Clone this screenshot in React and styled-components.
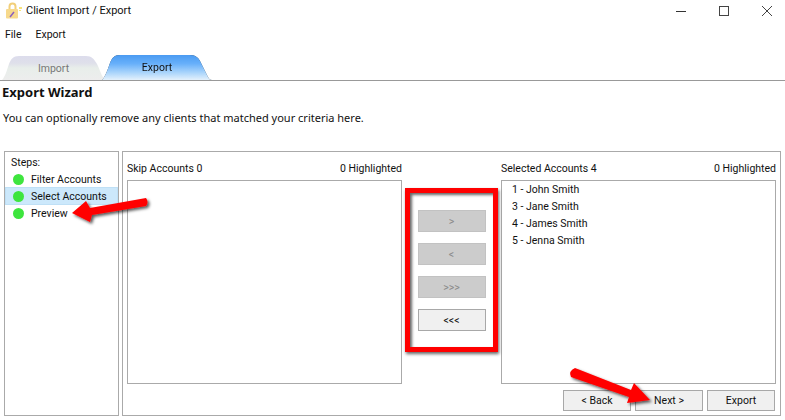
import styled, { createGlobalStyle } from 'styled-components';

const GlobalStyle = createGlobalStyle`
  html, body {
    margin: 0;
    padding: 0;
    background: #fff;
  }
  body {
    font-family: Roboto, "Noto Sans", sans-serif;
    font-size: 10.5px;
    color: #111;
  }
`;

const steps = [
  { label: 'Filter Accounts' },
  { label: 'Select Accounts', active: true },
  { label: 'Preview' },
];

const selected = ['1 - John Smith', '3 - Jane Smith', '4 - James Smith', '5 - Jenna Smith'];

const importShape = "path('M0 24 C3 21 5 14 7 8 C9 3 11 0 17 0 L84 0 C90 0 92 3 95 8 C98 14 100 21 103 24 Z')";
const exportShape = "path('M0 25 C3 22 6 14 8 8 C10 3 12 0 18 0 L88 0 C94 0 97 3 99 8 L106 22 C107 24 108 25 110 25 Z')";

export default function App() {
  return (
    <Page>
      <GlobalStyle />
      <TitleBar>
        <TitleLeft>
          <AppIcon />
          <span>Client Import / Export</span>
        </TitleLeft>
        <WindowControls>
          <svg width="12" height="12" viewBox="0 0 12 12">
            <path d="M1 6.5h10" stroke="#333" strokeWidth="1" />
          </svg>
          <svg width="12" height="12" viewBox="0 0 12 12" fill="none">
            <rect x="1.5" y="1.5" width="9" height="9" stroke="#444" strokeWidth="1" />
          </svg>
          <svg width="12" height="12" viewBox="0 0 12 12" fill="none">
            <path d="M1 1l10 10M11 1L1 11" stroke="#444" strokeWidth="1" />
          </svg>
        </WindowControls>
      </TitleBar>
      <MenuBar>
        <span>File</span>
        <span>Export</span>
      </MenuBar>
      <TabStrip>
        <Tab>
          <TabFace>Import</TabFace>
        </Tab>
        <Tab $active>
          <TabFace $active>Export</TabFace>
        </Tab>
      </TabStrip>
      <Heading>Export Wizard</Heading>
      <Intro>You can optionally remove any clients that matched your criteria here.</Intro>
      <Wizard>
        <StepsPanel>
          <StepsTitle>Steps:</StepsTitle>
          {steps.map((step) => (
            <StepRow key={step.label} $active={step.active}>
              <Dot />
              <span>{step.label}</span>
            </StepRow>
          ))}
        </StepsPanel>
        <MainPanel>
          <Columns>
            <ListColumn>
              <ListHeader>
                <span>Skip Accounts 0</span>
                <span>0 Highlighted</span>
              </ListHeader>
              <ListBox />
            </ListColumn>
            <MoveColumn>
              <MoveButton disabled>&gt;</MoveButton>
              <MoveButton disabled>&lt;</MoveButton>
              <MoveButton disabled>&gt;&gt;&gt;</MoveButton>
              <MoveButton>&lt;&lt;&lt;</MoveButton>
            </MoveColumn>
            <ListColumn>
              <ListHeader>
                <span>Selected Accounts 4</span>
                <span>0 Highlighted</span>
              </ListHeader>
              <ListBox>
                {selected.map((name) => (
                  <ListItem key={name}>{name}</ListItem>
                ))}
              </ListBox>
            </ListColumn>
          </Columns>
          <Footer>
            <NavButton>&lt; Back</NavButton>
            <NavButton>Next &gt;</NavButton>
            <NavButton>Export</NavButton>
          </Footer>
        </MainPanel>
      </Wizard>

      <RedFrame />
      <Annotation width="785" height="420" viewBox="0 0 785 420">
        <defs>
          <filter id="arrowShadow" x="-20%" y="-20%" width="140%" height="140%">
            <feDropShadow dx="2" dy="2" stdDeviation="1.5" floodColor="#000" floodOpacity="0.65" />
          </filter>
        </defs>
        <g filter="url(#arrowShadow)" fill="#f00">
          <path d="M146 198 Q149 202 146 206 L92 215 L90 222 L72 213 L86 201 L90 208 Z" />
          <path d="M575 368 L631 390 L634 383 L650 400 L627 403 L629 397 L571 377 Q568 371 575 368 Z" />
        </g>
      </Annotation>
    </Page>
  );
}

function AppIcon() {
  return (
    <svg width="18" height="17" viewBox="0 0 18 17">
      <path d="M4.5 8V4.5a3 3 0 0 1 6 0V8" fill="none" stroke="#f2cf7a" strokeWidth="2" />
      <rect x="1" y="7" width="12" height="9.5" rx="1" fill="#f7d98c" />
      <path d="M5 15l4-5" stroke="#8a5fc0" strokeWidth="1.5" />
      <path d="M14 5h3v2h-3zM14 8h2v1h-2z" fill="#f7e27a" />
    </svg>
  );
}

const Page = styled.div`
  position: relative;
  width: 785px;
  height: 420px;
  overflow: hidden;
  background: #fff;
`;

const TitleBar = styled.div`
  display: flex;
  justify-content: space-between;
  align-items: center;
  box-sizing: border-box;
  height: 24px;
  padding: 0 12px 3px 5px;
  font-size: 11px;
`;

const TitleLeft = styled.div`
  display: flex;
  align-items: center;
  gap: 3px;
`;

const WindowControls = styled.div`
  display: flex;
  align-items: center;
  gap: 31px;
`;

const MenuBar = styled.div`
  display: flex;
  gap: 14px;
  height: 30px;
  padding: 4px 0 0 5px;
  box-sizing: border-box;
  line-height: 14px;
`;

const TabStrip = styled.div`
  display: flex;
  align-items: flex-end;
  height: 26px;
  padding-left: 2px;
  border-bottom: 1px solid #999;
`;

const Tab = styled.div`
  width: ${(p) => (p.$active ? '110px' : '103px')};
  height: ${(p) => (p.$active ? '25px' : '24px')};
  margin-left: ${(p) => (p.$active ? '-3px' : '0')};
  filter: ${(p) => (p.$active ? 'drop-shadow(0 0 0.6px #345)' : 'none')};
`;

const TabFace = styled.div`
  display: flex;
  align-items: center;
  justify-content: center;
  height: 100%;
  clip-path: ${(p) => (p.$active ? exportShape : importShape)};
  color: ${(p) => (p.$active ? '#111' : '#777')};
  background: ${(p) =>
    p.$active
      ? 'linear-gradient(#4a9bf2 0%, #68b0fa 35%, #a9d4fb 70%, #e4f1fc 100%)'
      : 'linear-gradient(#dcdcec 0%, #dfe0ea 30%, #e8eeea 50%, #ededed 100%)'};
`;

const Heading = styled.div`
  margin: 4px 0 0 2px;
  font-family: "Noto Sans", sans-serif;
  font-size: 13px;
  font-weight: 700;
  line-height: 15px;
`;

const Intro = styled.div`
  margin: 11px 0 0 3px;
  font-family: "Noto Sans", sans-serif;
  font-size: 11px;
  line-height: 14px;
`;

const Wizard = styled.div`
  display: flex;
  gap: 3px;
  margin: 26px 0 0 4px;
  width: 777px;
  height: 265px;
`;

const StepsPanel = styled.div`
  box-sizing: border-box;
  width: 115px;
  padding: 3px 1px;
  border: 1px solid #aaa;
`;

const StepsTitle = styled.div`
  margin-bottom: 1px;
  padding-left: 5px;
  line-height: 15px;
`;

const StepRow = styled.div`
  display: flex;
  align-items: center;
  gap: 7px;
  height: 16px;
  margin-bottom: 1px;
  padding-left: 7px;
  background: ${(p) => (p.$active ? '#cce8fb' : 'transparent')};
  outline: ${(p) => (p.$active ? '1px solid #bfe0f6' : 'none')};
`;

const Dot = styled.span`
  width: 11px;
  height: 11px;
  border-radius: 50%;
  background: #3ee53e;
`;

const MainPanel = styled.div`
  flex: 1;
  box-sizing: border-box;
  display: flex;
  flex-direction: column;
  padding: 8px 4px 4px 4px;
  border: 1px solid #aaa;
`;

const Columns = styled.div`
  display: flex;
  flex: 1;
`;

const ListColumn = styled.div`
  display: flex;
  flex-direction: column;
  width: 275px;
`;

const ListHeader = styled.div`
  display: flex;
  justify-content: space-between;
  height: 20px;
  line-height: 18px;
`;

const ListBox = styled.div`
  box-sizing: border-box;
  height: 204px;
  padding: 0 10px;
  border: 1px solid #aaa;
`;

const ListItem = styled.div`
  height: 17px;
  line-height: 17px;
`;

const MoveColumn = styled.div`
  display: flex;
  flex: 1;
  flex-direction: column;
  align-items: center;
  gap: 11px;
  padding-top: 50px;
`;

const MoveButton = styled.button`
  box-sizing: border-box;
  width: 68px;
  height: 22px;
  padding: 0;
  font: inherit;
  color: ${(p) => (p.disabled ? '#8a8a8a' : '#111')};
  background: ${(p) => (p.disabled ? '#ccc' : '#f0f0f0')};
  border: 1px solid ${(p) => (p.disabled ? '#c2c2c2' : '#a8a8a8')};
`;

const Footer = styled.div`
  display: flex;
  justify-content: flex-end;
  gap: 4px;
  height: 21px;
  padding-right: 1px;
`;

const NavButton = styled.button`
  box-sizing: border-box;
  width: 68px;
  height: 21px;
  padding: 0;
  font: inherit;
  color: #111;
  background: #f0f0f0;
  border: 1px solid #a8a8a8;
`;

const RedFrame = styled.div`
  position: absolute;
  left: 405px;
  top: 188px;
  width: 93px;
  height: 164px;
  box-sizing: border-box;
  border: 5px solid #f00;
  box-shadow: 1px 2px 3px rgba(0, 0, 0, 0.6), inset 2px 2px 3px rgba(0, 0, 0, 0.6);
`;

const Annotation = styled.svg`
  position: absolute;
  left: 0;
  top: 0;
  pointer-events: none;
`;
